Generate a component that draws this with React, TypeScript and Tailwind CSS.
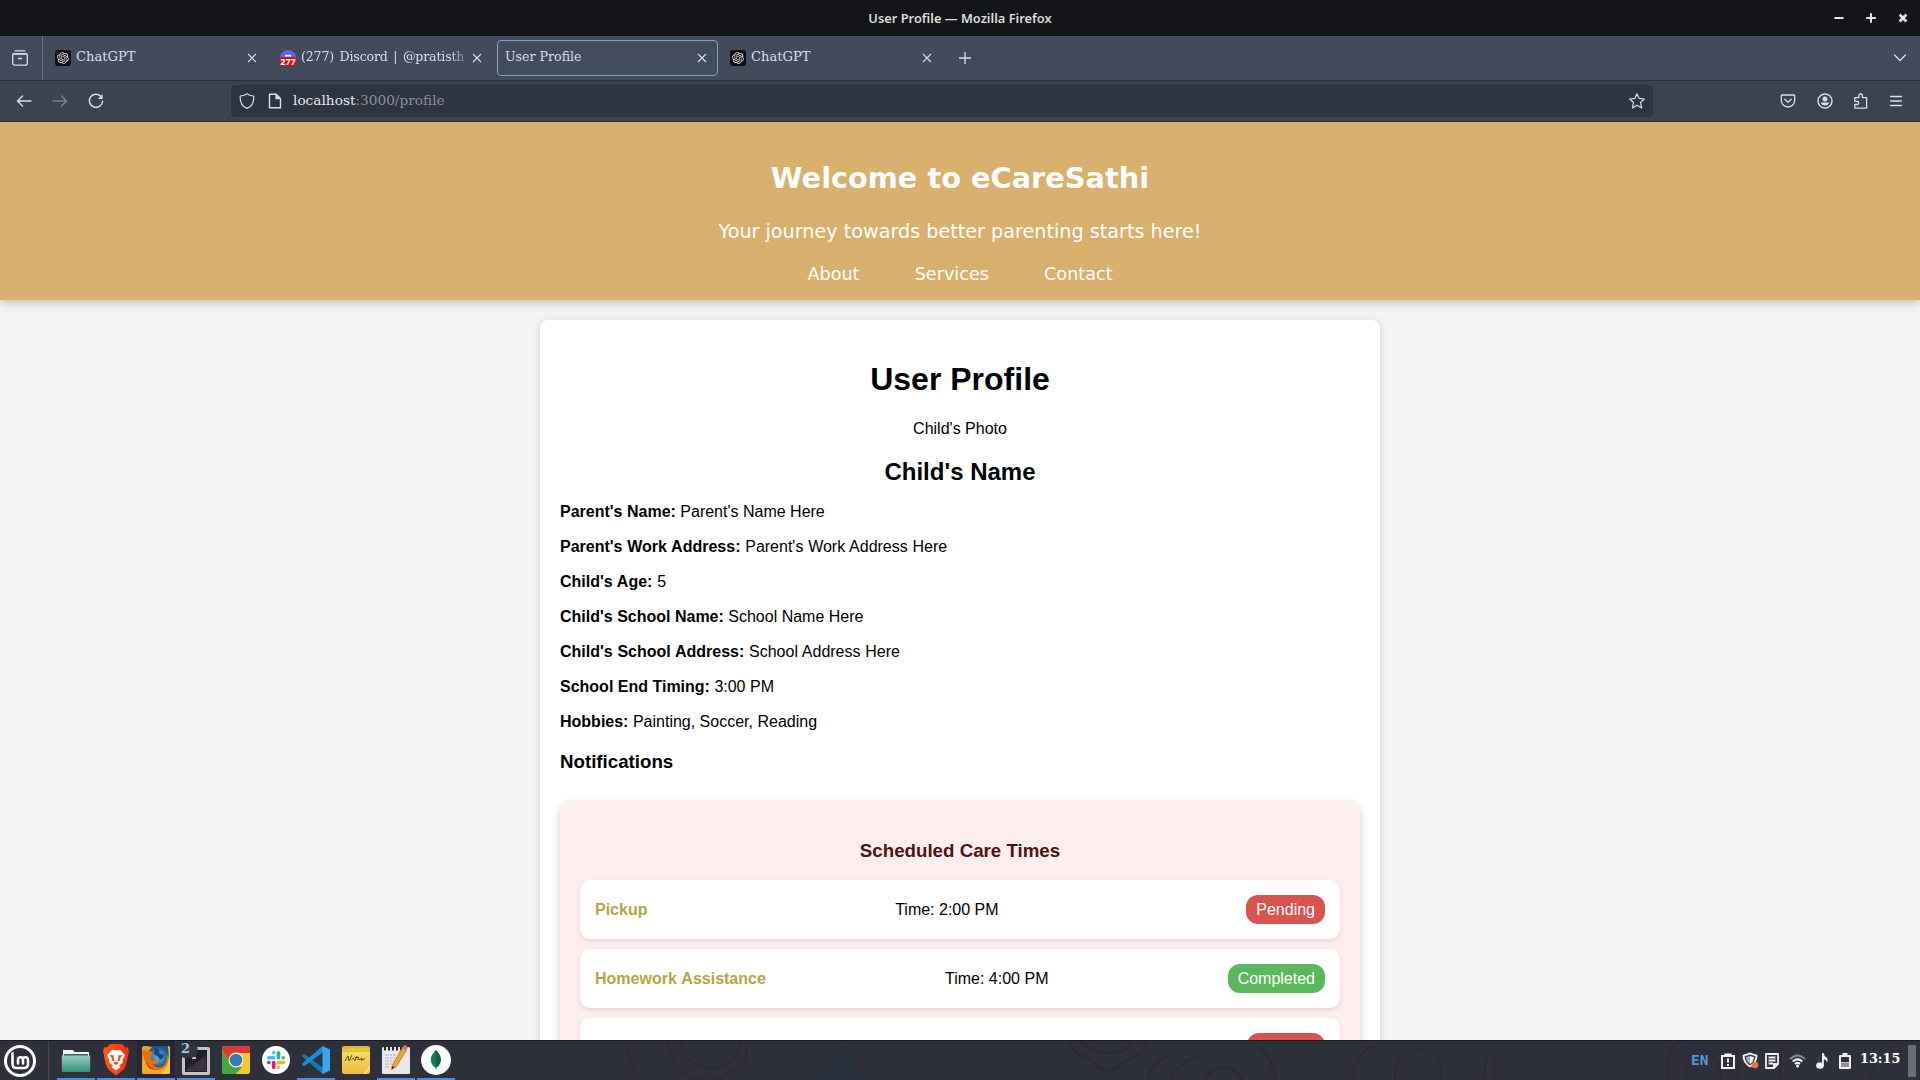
import React from "react";
import { RiOpenaiFill } from "react-icons/ri";

const CHROME_FONT = "font-['DejaVu_Serif',serif]";

function Svg({ size = 16, children, className = "" }: { size?: number; children: React.ReactNode; className?: string }) {
  return (
    <svg width={size} height={size} viewBox="0 0 16 16" fill="none" stroke="currentColor" strokeWidth="1.2" strokeLinecap="round" strokeLinejoin="round" className={`block shrink-0 ${className}`}>
      {children}
    </svg>
  );
}

function TitleBar() {
  return (
    <div className="relative flex h-9 shrink-0 items-center justify-center bg-[#131518]">
      <span className="whitespace-nowrap font-['Noto_Sans',sans-serif] text-[12.85px] font-semibold leading-4 text-[#dcdcdc]">User Profile — Mozilla Firefox</span>
      <div className="absolute right-[9px] top-[9px] flex gap-4 text-[#e6e6e6]">
        {["M3.4 9H12.6", "M3.2 9H12.8M8 4.2V13.8", "M4.6 5.6L11.4 12.4M11.4 5.6L4.6 12.4"].map((d, i) => (
          <svg key={d} width="16" height="18" viewBox="0 0 16 18" fill="none" stroke="currentColor" strokeWidth={i === 2 ? 2.8 : 2}>
            <path d={d} />
          </svg>
        ))}
      </div>
    </div>
  );
}

function GptIcon() {
  return (
    <span className="flex size-4 shrink-0 items-center justify-center rounded-[3px] bg-[#0d0d0d] text-[#e8e8e8]">
      <RiOpenaiFill size={14} />
    </span>
  );
}

function DiscordIcon() {
  return (
    <svg width="16" height="16" viewBox="0 0 16 16" className="block shrink-0">
      <circle cx="8" cy="8" r="8" fill="#5865f2" />
      <path d="M4.5 6.6Q4.8 4.6 6.5 4.3L7 5H9L9.5 4.3Q11.2 4.6 11.5 6.6Z" fill="#fff" />
      <path d="M0 8.5Q0 7 2 7H14Q16 7 16 8.5V13Q14 16 11 16H4Q1 16 0 13Z" fill="#d80f0f" />
      <text x="8" y="14.6" textAnchor="middle" textLength="15.6" lengthAdjust="spacingAndGlyphs" fontSize="8.6" fontWeight="700" fill="#fff" fontFamily="Open Sans, sans-serif">277</text>
    </svg>
  );
}

function Tab({ icon, title, active, fade }: { icon?: React.ReactNode; title: string; active?: boolean; fade?: boolean }) {
  return (
    <div className={`flex h-9 w-[221px] items-center rounded border pl-[7px] pr-[9px] ${active ? "border-[#81a1c1] bg-[#434c5e]" : "border-transparent"}`}>
      {icon && <span className="mr-[5px]">{icon}</span>}
      <span className={`-mt-[3px] min-w-0 flex-1 overflow-hidden whitespace-nowrap leading-4 text-[#d8dee9] ${active || fade ? "text-[12.6px]" : "text-[13.1px]"} ${fade ? "tracking-[-0.18px] [word-spacing:1.8px] [mask-image:linear-gradient(to_right,black_88%,transparent)]" : ""}`}>{title}</span>
      <svg width="12" height="12" viewBox="0 0 12 12" className="block shrink-0" stroke="#d8dee9" strokeWidth="1.1">
        <path d="M2 2L10 10M10 2L2 10" />
      </svg>
    </div>
  );
}

function TabStrip() {
  return (
    <div className={`flex h-[45px] shrink-0 items-center border-b border-[#2b303b] bg-[#434a5c] text-[#d8dee9] ${CHROME_FONT}`}>
      <div className="flex h-full w-[43px] items-center border-r border-[#6a7183] pl-3">
        <svg width="16" height="16" viewBox="0 0 16 16" fill="none" stroke="currentColor" strokeWidth="1.3" strokeLinecap="round">
          <path d="M3 .8H13" />
          <rect x=".7" y="3.6" width="14.6" height="11.6" rx="2" />
          <path d="M6.5 8.5H9.5" />
          <path d="M1 4.2H15" />
        </svg>
      </div>
      <div className="ml-1 flex gap-1">
        <Tab icon={<GptIcon />} title="ChatGPT" />
        <Tab icon={<DiscordIcon />} title="(277) Discord | @pratisth" fade />
        <Tab title="User Profile" active />
        <Tab icon={<GptIcon />} title="ChatGPT" />
      </div>
      <svg width="14" height="14" viewBox="0 0 14 14" className="ml-[15px]" stroke="currentColor" strokeWidth="1.3">
        <path d="M7 1V13M1 7H13" />
      </svg>
      <svg width="14" height="14" viewBox="0 0 14 14" className="ml-auto mr-[13px]" fill="none" stroke="currentColor" strokeWidth="1.3" strokeLinecap="round">
        <path d="M1.5 4L7 9.5L12.5 4" />
      </svg>
    </div>
  );
}

function NavBar() {
  return (
    <div className={`flex h-[41px] shrink-0 items-center border-b border-[#2b303b] bg-[#3c4251] pl-4 pr-4 text-[#d8dee9] ${CHROME_FONT}`}>
      <div className="flex w-[215px] gap-5">
        <Svg className="[stroke-width:1.4]"><path d="M15 8H1.5M6.5 3L1.5 8L6.5 13" /></Svg>
        <Svg className="text-[#7a8191] [stroke-width:1.4]"><path d="M1 8H14.5M9.5 3L14.5 8L9.5 13" /></Svg>
        <Svg className="[stroke-width:1.5]">
          <path d="M12.6 3A6.6 6.6 0 1 0 14.6 8.2" />
          <path d="M14.6 1.2V6H9.8Z" fill="currentColor" stroke="none" />
        </Svg>
      </div>
      <div className="flex h-8 w-[1422px] items-center rounded bg-[#2e3440] px-2">
        <Svg><path d="M8 .6C6 2.3 3.6 3 1.2 3C.9 9 3.5 13.6 8 15.4C12.5 13.6 15.1 9 14.8 3C12.4 3 10 2.3 8 .6Z" /></Svg>
        <Svg className="ml-3">
          <path d="M2.5 1.2H9L13.5 5.7V14.8H2.5Z" strokeWidth="1.4" />
          <path d="M9 1.2V5.7H13.5Z" fill="currentColor" />
        </Svg>
        <span className="-mt-[2px] ml-[10px] text-[13.7px] leading-5 text-[#8a8f9b]"><span className="text-[#e5e9f0]">localhost</span>:3000/profile</span>
        <Svg className="ml-auto"><path d="M8 .8L10.1 5.4L15.3 6L11.5 9.5L12.6 14.9L8 12.3L3.4 14.9L4.5 9.5L.7 6L5.9 5.4Z" /></Svg>
      </div>
      <div className="ml-auto flex">
        <Svg className="[stroke-width:1.3]"><path d="M2.2 2H13.8Q14.7 2 14.7 3V7.3A6.7 6.7 0 0 1 1.3 7.3V3Q1.3 2 2.2 2ZM4.7 6.3L8 9.3L11.3 6.3" /></Svg>
        <Svg className="ml-[21px] [stroke-width:1.4]">
          <circle cx="8" cy="8" r="7" />
          <circle cx="8" cy="6" r="2.5" fill="currentColor" stroke="none" />
          <path d="M3.8 9.5H12.2Q11.5 12.5 8 12.5T3.8 9.5Z" fill="currentColor" stroke="none" />
        </Svg>
        <Svg className="ml-5 [stroke-width:1.3]"><path d="M1.8 15.2V11.5H4.2A1.6 1.6 0 0 0 4.2 8.3H1.8V4.7H5.9V2.8A1.8 1.8 0 0 1 9.5 2.8V4.7H13.6V15.2Z" /></Svg>
        <Svg className="ml-[19px] [stroke-width:1.3]"><path d="M2.5 3.5H13.5M2.5 8H13.5M2.5 12.5H13.5" /></Svg>
      </div>
    </div>
  );
}

function SiteHeader() {
  return (
    <header className="relative flex h-[178px] shrink-0 flex-col items-center bg-[#d9b06e] pt-[39px] font-['DejaVu_Sans',sans-serif] text-white shadow-[0_2px_8px_rgba(0,0,0,0.25)]">
      <h1 className="text-[28.8px] font-bold leading-[34px]">Welcome to eCareSathi</h1>
      <p className="mt-6 text-[19.2px] leading-[26px]">Your journey towards better parenting starts here!</p>
      <nav className="mt-[18px] flex gap-[55.2px] text-[17.6px] leading-[22px]">
        <a>About</a>
        <a>Services</a>
        <a>Contact</a>
      </nav>
    </header>
  );
}

const DETAILS = [
  ["Parent's Name:", "Parent's Name Here"],
  ["Parent's Work Address:", "Parent's Work Address Here"],
  ["Child's Age:", "5"],
  ["Child's School Name:", "School Name Here"],
  ["Child's School Address:", "School Address Here"],
  ["School End Timing:", "3:00 PM"],
  ["Hobbies:", "Painting, Soccer, Reading"],
];

const CARE = [
  { name: "Pickup", time: "Time: 2:00 PM", status: "Pending" },
  { name: "Homework Assistance", time: "Time: 4:00 PM", status: "Completed" },
  { name: "", time: "", status: "" },
];

function Profile() {
  return (
    <main className="mx-auto mt-5 flex w-[840px] shrink-0 flex-col rounded-lg bg-white px-5 pb-5 pt-[41px] text-base leading-[19px] text-black shadow-[0_2px_10px_rgba(0,0,0,0.12)]">
      <h1 className="text-center text-[32px] font-bold leading-[37px]">User Profile</h1>
      <p className="mt-[21px] text-center">Child's Photo</p>
      <h2 className="mt-5 text-center text-2xl font-bold leading-7">Child's Name</h2>
      <div className="mt-4 flex flex-col gap-4">
        {DETAILS.map(([label, value]) => (
          <p key={label} className={label.includes(" A") ? "[word-spacing:0.3px]" : ""}><strong className="font-bold">{label}</strong> {value}</p>
        ))}
      </div>
      <h3 className="mt-5 text-[18.72px] font-bold leading-[22px]">Notifications</h3>
      <section className="mt-[29px] rounded-[10px] bg-[#ffeeee] px-5 pb-5 pt-[38px] shadow-[0_2px_10px_rgba(0,0,0,0.2)]">
        <h3 className="text-center text-[18.72px] font-bold leading-[22px] text-[#4e1313]">Scheduled Care Times</h3>
        <div className="mt-[18px] flex flex-col gap-[10px]">
          {CARE.map((c, i) => (
            <div key={i} className="flex h-[59px] items-center justify-between rounded-[10px] bg-white px-[15px] shadow-[0_2px_5px_rgba(0,0,0,0.1)]">
              <span className="font-bold text-[#b5a642] [word-spacing:0.7px]">{c.name}</span>
              <span>{c.time}</span>
              <span className={`h-[29px] min-w-[78px] rounded-xl px-[10px] py-[5px] text-white ${c.status === "Completed" ? "bg-[#5cb85c]" : "bg-[#d9534f]"}`}>{c.status}</span>
            </div>
          ))}
        </div>
      </section>
    </main>
  );
}

function FilesIcon() {
  return (
    <svg width="30" height="30" viewBox="0 0 30 30">
      <defs><linearGradient id="fold" x2="0" y2="1"><stop stopColor="#8fcfbb" /><stop offset="1" stopColor="#3b9180" /></linearGradient></defs>
      <path d="M2 5H12L13.5 7H28V14H2Z" fill="#f2f2ef" />
      <path d="M3 9H27V12H3Z" fill="#34675c" />
      <path d="M.8 10.5H29.2V25.5Q29.2 27 27.7 27H2.3Q.8 27 .8 25.5Z" fill="url(#fold)" />
    </svg>
  );
}

function BraveIcon() {
  return (
    <svg width="30" height="34" viewBox="0 0 30 34">
      <defs><linearGradient id="brv" x2="1"><stop stopColor="#ff5a1f" /><stop offset="1" stopColor="#ff2d0a" /></linearGradient></defs>
      <path d="M9 1H21L24 4.2L27 4.5L28 9L27 12Q25.500 24 22 27L15 32.500L8 27Q4.500 24 3 12L2 9L3 4.500L6 4.200Z" fill="url(#brv)" />
      <path d="M15 7.500L19 6.800L24 12L21.500 17L22 19.500L18 22.500L19.500 24L15 27.500L10.500 24L12 22.500L8 19.500L8.500 17L6 12L11 6.800Z" fill="#fff" />
      <path d="M8.800 11.800L13 12.600L12.500 14L13.700 18.500L11.500 18Q11 15 8.800 11.800ZM21.200 11.800L17 12.600L17.500 14L16.300 18.500L18.500 18Q19 15 21.200 11.800ZM12 20L15 18.800L18 20L15 22Z" fill="#ff421a" />
    </svg>
  );
}

function FirefoxIcon() {
  return (
    <svg width="28" height="28" viewBox="0 0 28 28">
      <defs>
        <linearGradient id="ffx" x2="1" y2="1"><stop stopColor="#f2a01e" /><stop offset=".6" stopColor="#f08a17" /><stop offset="1" stopColor="#f7d040" /></linearGradient>
        <radialGradient id="glb"><stop stopColor="#62bde6" /><stop offset="1" stopColor="#1e4c8f" /></radialGradient>
        <clipPath id="ffclip"><rect width="28" height="28" rx="2" /></clipPath>
      </defs>
      <g clipPath="url(#ffclip)">
        <rect width="28" height="28" fill="url(#ffx)" />
        <path d="M5 0H26L28 3V14L23 5Z" fill="#24518e" />
        <circle cx="16" cy="11" r="11" fill="url(#glb)" />
        <path d="M13 1Q19 3 17 7L22 9Q21 13 18 14Q16 10 12 8Z" fill="#1c467f" />
        <path d="M0 6Q2 2 4 5Q9 4 11 8L9 11Q8 15 13 15Q16 14 17 15.500Q14 20 10 18Q15 24 21 20Q26 16 25 7Q29 19 22 24Q13 29 5 22Q0 17 0 6Z" fill="#ea6f13" />
        <path d="M1 9Q4 20 11 23.500Q20 26 25 18Q24 28 14 28H0Z" fill="#f8a922" />
        <path d="M3 13Q5 19 10 22L13 24Q5 25 3 13Z" fill="#c84612" />
        <path d="M26 0H28V28H20Q29 18 26 0Z" fill="#f7cc36" />
      </g>
    </svg>
  );
}

function TerminalIcon() {
  return (
    <span className="relative block h-[38px] w-[38px]">
      <svg width="38" height="38" viewBox="0 0 38 38">
        <rect x="5" y="6" width="28" height="28" rx="2" fill="#c4c4c4" />
        <rect x="8" y="9" width="22" height="22" fill="#221f2a" />
        <path d="M9 29L29 15V30H9Z" fill="#393344" />
        <path d="M15 17H19" stroke="#fff" strokeWidth="1.500" />
        <ellipse cx="11" cy="9.500" rx="10" ry="8" fill="#2e3440" />
      </svg>
      <span className="absolute left-1 top-0 font-['DejaVu_Serif',serif] text-[13px] font-bold leading-4 text-[#a9c6e8]">2</span>
    </span>
  );
}

function ChromeIcon() {
  return (
    <svg width="28" height="28" viewBox="0 0 28 28">
      <rect width="28" height="28" rx="2" fill="#f6c829" />
      <path d="M0 2Q0 0 2 0H26Q28 0 28 2V7H14L8 17L0 4Z" fill="#db3a32" />
      <path d="M0 4L8 17L14 21H20L14 28H2Q0 28 0 26Z" fill="#46a642" />
      <circle cx="14" cy="14" r="7.500" fill="#f3f3f3" />
      <circle cx="14" cy="14" r="6.300" fill="#3977b9" />
    </svg>
  );
}

function SlackIcon() {
  return (
    <svg width="28" height="28" viewBox="0 0 28 28">
      <circle cx="14" cy="14" r="14" fill="#fff" />
      <g strokeWidth="3.600" strokeLinecap="round">
        <path d="M6.700 11.700H11.700M11.700 6.800H11.710" stroke="#36c5f0" />
        <path d="M16.500 6.800V11.700M21.200 11.700H21.210" stroke="#2eb67d" />
        <path d="M16.500 16.500H21.400M16.500 21.200H16.510" stroke="#ecb22e" />
        <path d="M11.700 16.500V21.400M6.800 16.500H6.810" stroke="#e01e5a" />
      </g>
    </svg>
  );
}

function CodeIcon() {
  return (
    <svg width="28" height="28" viewBox="0 0 28 28">
      <path d="M0 9.500L2 7.800L22 22.500V28L20 27.400L.2 10.400Z" fill="#1279bd" />
      <path d="M0 18.500L2 20.200L22 5.500V0L20 .6L.2 17.600Z" fill="#1c8dd0" />
      <path d="M20.500 0L28 3.500V24.500L20.500 28Z" fill="#35a7ee" />
    </svg>
  );
}

function NotesIcon() {
  return (
    <svg width="28" height="28" viewBox="0 0 28 28">
      <defs><linearGradient id="nte" x2="0" y2="1"><stop stopColor="#d9b12c" /><stop offset=".25" stopColor="#f6da60" /><stop offset="1" stopColor="#eebc3d" /></linearGradient></defs>
      <rect width="28" height="28" rx="2" fill="url(#nte)" />
      <path d="M0 5H28" stroke="#d0a627" strokeWidth=".7" />
      <path d="M3 15L6 10L7 15L10 9M9.500 14Q11 11 12 13T13 14.500L15 10M12.500 11.500H17M15 14Q18 11 17 14L20 12L19.500 14.500L23 12.500" fill="none" stroke="#4c421e" strokeWidth=".9" />
      <path d="M22 27Q27 25 27 20" fill="none" stroke="#fae787" strokeWidth="1.500" />
    </svg>
  );
}

function EditorIcon() {
  return (
    <svg width="30" height="32" viewBox="0 0 30 32">
      <rect x="1" y="3" width="28" height="27" rx="1.500" fill="#e8e8e8" />
      <path d="M3 4.500H27" stroke="#27272b" strokeWidth="4" strokeDasharray="2 2" />
      <path d="M4 11H15M4 14H14M4 17H13M4 20H12M4 23H11" stroke="#a9b3cc" strokeWidth="1" strokeDasharray="4 1 2 1" />
      <path d="M10.500 25.500L12 20L21.500 3.500L25.500 6L15.500 22.500Z" fill="#f0a52c" stroke="#a26112" strokeWidth=".6" />
      <path d="M21.500 3.500L23.500 .8L27 3.200L25.500 6Z" fill="#d9725d" />
      <path d="M10.500 25.500L11.500 22L13.500 23.500Z" fill="#27272b" />
    </svg>
  );
}

function MongoIcon() {
  return (
    <svg width="30" height="30" viewBox="0 0 30 30">
      <circle cx="15" cy="15" r="15" fill="#fff" />
      <path d="M15 5Q20 10 20 14.500Q20 19.500 15.500 22.500L15.300 25H14.700L14.500 22.500Q10 19.500 10 14.500Q10 10 15 5Z" fill="#00684a" />
      <path d="M15 5Q10 10 10 14.500Q10 19.500 14.500 22.500Z" fill="#11804f" />
    </svg>
  );
}

const APPS = [
  { icon: <FilesIcon />, open: true },
  { icon: <BraveIcon />, open: true },
  { icon: <FirefoxIcon />, open: true, focus: true },
  { icon: <TerminalIcon />, open: true },
  { icon: <ChromeIcon />, open: false },
  { icon: <SlackIcon />, open: false },
  { icon: <CodeIcon />, open: true },
  { icon: <NotesIcon />, open: false },
  { icon: <EditorIcon />, open: true },
  { icon: <MongoIcon />, open: true },
];

function Tray() {
  return (
    <div className="ml-auto flex h-full items-center text-[#f2f2f2]">
      <span className="-mt-px mr-[13px] w-[17px] whitespace-nowrap font-['DejaVu_Sans_Mono',monospace] text-[14.4px] font-bold leading-4 text-[#4f9bd5]">EN</span>
      <svg width="14" height="16" viewBox="0 0 14 16" fill="none" stroke="currentColor" strokeWidth="2">
        <path d="M1 3H13V15H1ZM7 5.500V9.500M7 11V13" />
        <path d="M4.500 2.500V1.500H9.500V2.500" />
      </svg>
      <svg width="17" height="17" viewBox="0 0 17 17" className="ml-[7px]">
        <path d="M8 .5L15.500 3Q15.500 11.500 8 15.500Q.5 11.500 .5 3Z" fill="#f2f2f2" />
        <path d="M8 2.500L13.500 4.300Q13 10.500 8 13.500Q3 10.500 2.500 4.300Z" fill="#3b404b" />
        <path d="M8 4L12 5.300Q11.500 10 8 12Z" fill="#f2f2f2" />
        <path d="M8 4L4 5.300Q4.500 10 8 12Z" fill="#a9adb4" />
        <circle cx="13" cy="13" r="3.300" fill="#f2733b" />
      </svg>
      <svg width="14" height="16" viewBox="0 0 14 16" className="ml-[6px]" fill="none" stroke="currentColor" strokeWidth="1.800">
        <path d="M1 1H13V11L9 15H1ZM3.500 4.500H10.500M3.500 7.500H10.500M3.500 10.500H8M9 15V11H13" />
      </svg>
      <svg width="17" height="14" viewBox="0 0 17 14" className="ml-[10px]" fill="none" stroke="currentColor" strokeWidth="2">
        <path d="M1 5Q8.500 -2 16 5" stroke="#858a93" />
        <path d="M3.700 7.500Q8.500 3.200 13.300 7.500M6 10Q8.500 7.800 11 10" />
        <circle cx="8.500" cy="12" r="1.500" fill="currentColor" stroke="none" />
      </svg>
      <svg width="13" height="16" viewBox="0 0 13 16" className="ml-[10px]">
        <ellipse cx="4" cy="12.500" rx="3.800" ry="3.200" fill="currentColor" />
        <path d="M6 0H7.800Q8 3 10.500 4.500Q12.500 6 11 9.500Q10.500 6.500 7.800 6V13H6Z" fill="currentColor" />
      </svg>
      <svg width="12" height="16" viewBox="0 0 12 16" className="ml-[10px]">
        <path d="M3.500 0H8.500V2H11Q12 2 12 3V15Q12 16 11 16H1Q0 16 0 15V3Q0 2 1 2H3.500Z" fill="currentColor" />
        <path d="M2 4H10V9H2Z" fill="#2e333e" />
        <path d="M2 9.500H10V14H2Z" fill="#8d9097" />
      </svg>
      <span className="-mt-[3px] ml-[9px] w-[41px] whitespace-nowrap font-['DejaVu_Serif',serif] text-[12.8px] font-bold leading-4 text-white">13:15</span>
      <span className="ml-[7px] mr-1 h-8 w-2 bg-[#6c6e77]" />
    </div>
  );
}

function Taskbar() {
  return (
    <footer className="relative flex h-10 shrink-0 items-center overflow-hidden border-t border-[#1b1c22] bg-[#2e313c]">
      <svg className="absolute inset-0 opacity-60" width="1920" height="40" viewBox="0 0 1920 40" fill="none" stroke="#2b2632" strokeWidth="1.500">
        <path d="M626 0Q628 25 642 40M668 0Q670 28 690 36Q715 45 730 30Q750 25 746 0M680 0Q682 22 710 28Q738 24 740 0" />
        <path strokeWidth="2.500" d="M1070 0Q1072 12 1090 18Q1105 40 1125 20Q1145 15 1148 0M1080 0Q1095 12 1110 12Q1130 10 1132 0M1148 40Q1150 22 1170 14M1170 40Q1175 22 1203 14M1204 40Q1210 27 1225 26Q1235 27 1243 40M1260 8Q1270 12 1276 40" />
        <path d="M1352 40Q1355 10 1375 4M1395 40Q1395 8 1420 8Q1445 8 1440 40M1484 40Q1485 12 1490 12Q1495 12 1495 40" />
        <path d="M1668 40Q1664 10 1680 0M1688 40Q1685 10 1702 8Q1720 14 1722 40M1735 0Q1740 15 1736 40M1778 0Q1784 20 1778 40M1870 40Q1872 12 1890 0" />
        <path d="M815 40Q830 25 835 10L840 0Q852 10 855 25L870 40Z" fill="#26323c" stroke="none" />
      </svg>
      <div className="relative flex h-full w-full items-center">
        <span className="ml-1 flex size-8 items-center justify-center rounded-full border-[3px] border-white">
          <svg width="22" height="18" viewBox="0 0 22 18" fill="none" stroke="#fff" strokeWidth="2.600" strokeLinecap="round">
            <path d="M3.500 1.300V12Q3.500 16 7.500 16H15Q19 16 19 12V8Q19 5.300 16.400 5.300T14 8V11.500M14 8Q14 5.300 11.500 5.300T9 8V11.500" />
          </svg>
        </span>
        <span className="ml-3 h-full w-px bg-[#484b55]" />
        <div className="ml-2 flex h-full gap-[2px]">
          {APPS.map((a, i) => (
            <div key={i} className={`flex h-full w-[38px] flex-col items-center ${a.focus ? "bg-[#252834]" : ""}`}>
              <div className="flex h-[37px] items-center justify-center">{a.icon}</div>
              {a.open && <div className="h-[2px] w-full bg-[#4a8ee0]" />}
            </div>
          ))}
        </div>
        <Tray />
      </div>
    </footer>
  );
}

export default function App() {
  return (
    <div className="flex h-[1080px] w-[1920px] flex-col overflow-hidden font-['Liberation_Sans',Arial,sans-serif]">
      <TitleBar />
      <TabStrip />
      <NavBar />
      <div className="flex min-h-0 flex-1 flex-col overflow-hidden bg-[#f3f3f3]">
        <SiteHeader />
        <Profile />
      </div>
      <Taskbar />
    </div>
  );
}
